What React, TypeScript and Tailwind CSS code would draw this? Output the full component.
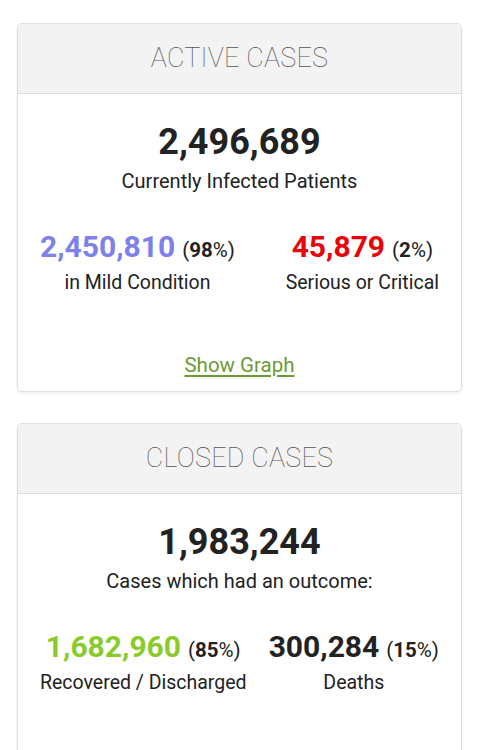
import { type ReactNode } from 'react'

// Tarjetas de resumen: casos activos / cerrados

interface Split {
  value:   string
  pct:     string
  label:   string
  color:   string
}

function SplitCell({ value, pct, label, color }: Split) {
  return (
    <div className="flex flex-col items-center">
      <div className="flex items-baseline whitespace-nowrap">
        <span className={`text-[30px] leading-[36px] font-bold ${color}`}>{value}</span>
        <span className="ml-[7px] text-[20.5px] text-[#222]">
          (<strong className="font-bold">{pct}</strong>%)
        </span>
      </div>
      <div className="mt-[4px] text-[19.5px] leading-[26px] text-[#222]">{label}</div>
    </div>
  )
}

function Card({
  title,
  total,
  caption,
  left,
  right,
  footer,
}: {
  title:   string
  total:   string
  caption: string
  left:    Split
  right:   Split
  footer?: ReactNode
}) {
  return (
    <section className="rounded-[5px] border border-[#dedede] bg-white shadow-[0_2px_3px_rgba(0,0,0,0.06)]">
      <header className="flex h-[70px] items-center justify-center rounded-t-[5px] border-b border-[#dcdcdc] bg-[#f3f3f3]">
        <h2 className="text-[27px] font-thin tracking-[0.2px] text-[#555]">{title}</h2>
      </header>
      <div className="flex flex-col items-center pt-[27px] pb-[13px]">
        <div className="text-[36px] leading-[42px] font-bold text-[#222]">{total}</div>
        <div className="mt-[5px] text-[20px] leading-[26px] text-[#222]">{caption}</div>
        <div className="mt-[35px] flex w-full justify-between px-[22px]">
          <SplitCell {...left} />
          <SplitCell {...right} />
        </div>
        {footer}
      </div>
    </section>
  )
}

export default function App() {
  return (
    <div
      className="h-[750px] overflow-hidden bg-white px-[17px] pt-[23px]"
      style={{ fontFamily: 'Roboto, "Liberation Sans", sans-serif' }}
    >
      <div className="flex flex-col gap-[31px] w-[445px]">
        <Card
          title="ACTIVE CASES"
          total="2,496,689"
          caption="Currently Infected Patients"
          left={{ value: '2,450,810', pct: '98', label: 'in Mild Condition', color: 'text-[#7e80ec]' }}
          right={{ value: '45,879', pct: '2', label: 'Serious or Critical', color: 'text-[#e8050a]' }}
          footer={
            <a
              href="#"
              className="mt-[56px] text-[20.5px] leading-[26px] text-[#6c9a35] underline decoration-[1.5px] underline-offset-[3px]"
            >
              Show Graph
            </a>
          }
        />
        <Card
          title="CLOSED CASES"
          total="1,983,244"
          caption="Cases which had an outcome:"
          left={{ value: '1,682,960', pct: '85', label: 'Recovered / Discharged', color: 'text-[#8aca2b]' }}
          right={{ value: '300,284', pct: '15', label: 'Deaths', color: 'text-[#222]' }}
          footer={<div className="h-[80px]" />}
        />
      </div>
    </div>
  )
}
